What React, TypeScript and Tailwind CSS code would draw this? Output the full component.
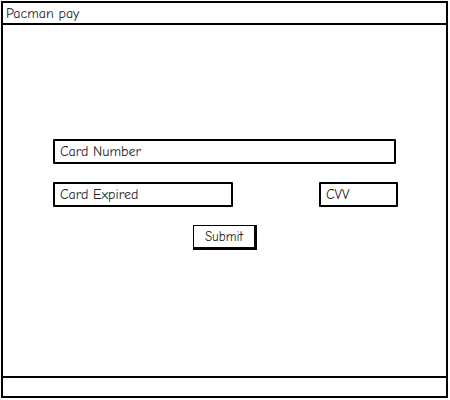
import React from 'react';

const font = { fontFamily: '"Comic Neue", "Open Sans", "DejaVu Sans", sans-serif' };

function Field({ label, className }: { label: string; className: string }) {
  return (
    <div className={`h-[25px] border-2 border-black rounded-[1px] flex items-center pl-[5px] text-[14px] font-medium text-[#222] bg-white ${className}`}>
      {label}
    </div>
  );
}

export default function App() {
  return (
    <div className="w-[450px] h-[400px] bg-white p-[1px]" style={font}>
      <div className="w-[447px] h-[397px] border-2 border-black flex flex-col">
        {/* Title bar */}
        <div className="h-[22px] border-b-2 border-black flex items-center pl-[3px] text-[14px] font-medium text-[#222]">
          Pacman pay
        </div>

        {/* Form */}
        <div className="flex-1 pt-[114px] pl-[50px]">
          <Field label="Card Number" className="w-[343px]" />
          <div className="flex mt-[18px]">
            <Field label="Card Expired" className="w-[180px]" />
            <Field label="CVV" className="w-[79px] ml-[86px]" />
          </div>
          <div className="flex mt-[18px] pl-[140px]">
            <button className="w-[64px] h-[25px] border border-black border-r-[3px] border-b-[3px] bg-white text-[13px] font-medium text-[#222] flex items-center justify-center">
              Submit
            </button>
          </div>
        </div>

        {/* Status bar */}
        <div className="h-[20px] border-t-2 border-black" />
      </div>
    </div>
  );
}
